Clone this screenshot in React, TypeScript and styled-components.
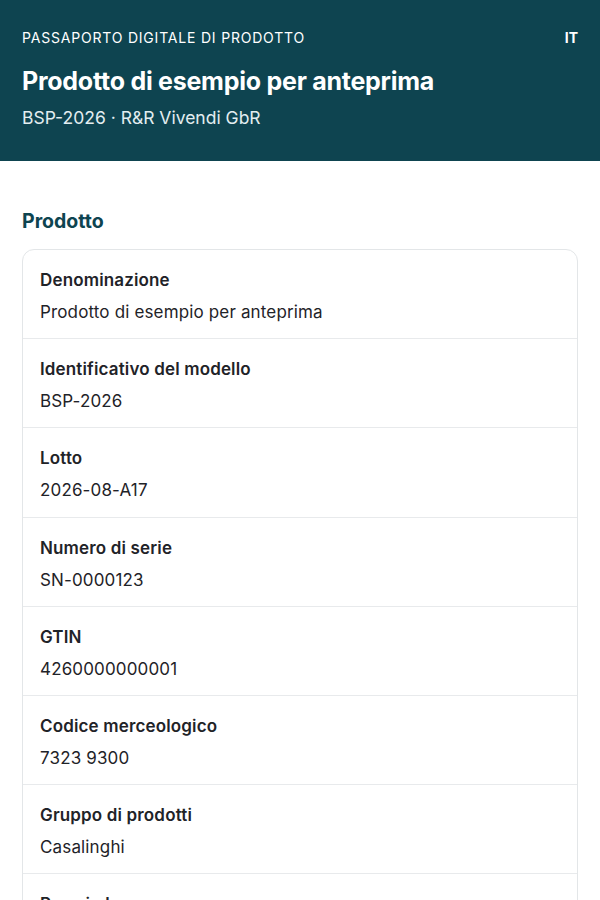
import React from "react";
import styled, { createGlobalStyle } from "styled-components";

const Global = createGlobalStyle`
  html, body { margin: 0; padding: 0; background: #ffffff; }
  body { font-family: Inter, "Noto Sans", sans-serif; color: #1f2328; -webkit-font-smoothing: antialiased; }
  * { box-sizing: border-box; }
`;

const Header = styled.header`
  background: #0e4450;
  color: #ffffff;
  padding: 29px 22px 32px;
`;

const TopBar = styled.div`
  display: flex;
  justify-content: space-between;
  align-items: center;
`;

const Kicker = styled.div`
  font-size: 14px;
  letter-spacing: 0.8px;
  text-transform: uppercase;
  line-height: 18px;
`;

const Lang = styled.div`
  font-size: 14px;
  font-weight: 700;
  line-height: 18px;
`;

const Title = styled.h1`
  margin: 18px 0 0;
  font-size: 25px;
  font-weight: 700;
  line-height: 32px;
  letter-spacing: -0.25px;
`;

const Subtitle = styled.div`
  margin-top: 10px;
  font-size: 17.5px;
  line-height: 22px;
  color: #e3eef0;
`;

const Main = styled.main`
  padding: 48px 22px 40px;
`;

const SectionTitle = styled.h2`
  margin: 0 0 16px;
  font-size: 19.5px;
  font-weight: 700;
  line-height: 24px;
  color: #0e4450;
`;

const Card = styled.div`
  border: 1px solid #e3e6e8;
  border-radius: 12px;
  overflow: hidden;
`;

const Row = styled.div`
  padding: 18px 17px 14.2px;
  border-top: 1px solid #e8eaec;
  &:first-child { border-top: none; }
`;

const Label = styled.div`
  font-size: 17px;
  font-weight: 600;
  line-height: 24px;
  letter-spacing: 0.15px;
  color: #1f2328;
`;

const Value = styled.div`
  margin-top: 8px;
  font-size: 17px;
  line-height: 24px;
  letter-spacing: 0.15px;
  color: #1f2328;
`;

const rows: [string, string][] = [
  ["Denominazione", "Prodotto di esempio per anteprima"],
  ["Identificativo del modello", "BSP-2026"],
  ["Lotto", "2026-08-A17"],
  ["Numero di serie", "SN-0000123"],
  ["GTIN", "4260000000001"],
  ["Codice merceologico", "7323 9300"],
  ["Gruppo di prodotti", "Casalinghi"],
  ["Peso in kg", "0,85"],
];

export default function App() {
  return (
    <>
      <Global />
      <Header>
        <TopBar>
          <Kicker>Passaporto digitale di prodotto</Kicker>
          <Lang>IT</Lang>
        </TopBar>
        <Title>Prodotto di esempio per anteprima</Title>
        <Subtitle>BSP-2026 · R&amp;R Vivendi GbR</Subtitle>
      </Header>
      <Main>
        <SectionTitle>Prodotto</SectionTitle>
        <Card>
          {rows.map(([l, v]) => (
            <Row key={l}>
              <Label>{l}</Label>
              <Value>{v}</Value>
            </Row>
          ))}
        </Card>
      </Main>
    </>
  );
}
